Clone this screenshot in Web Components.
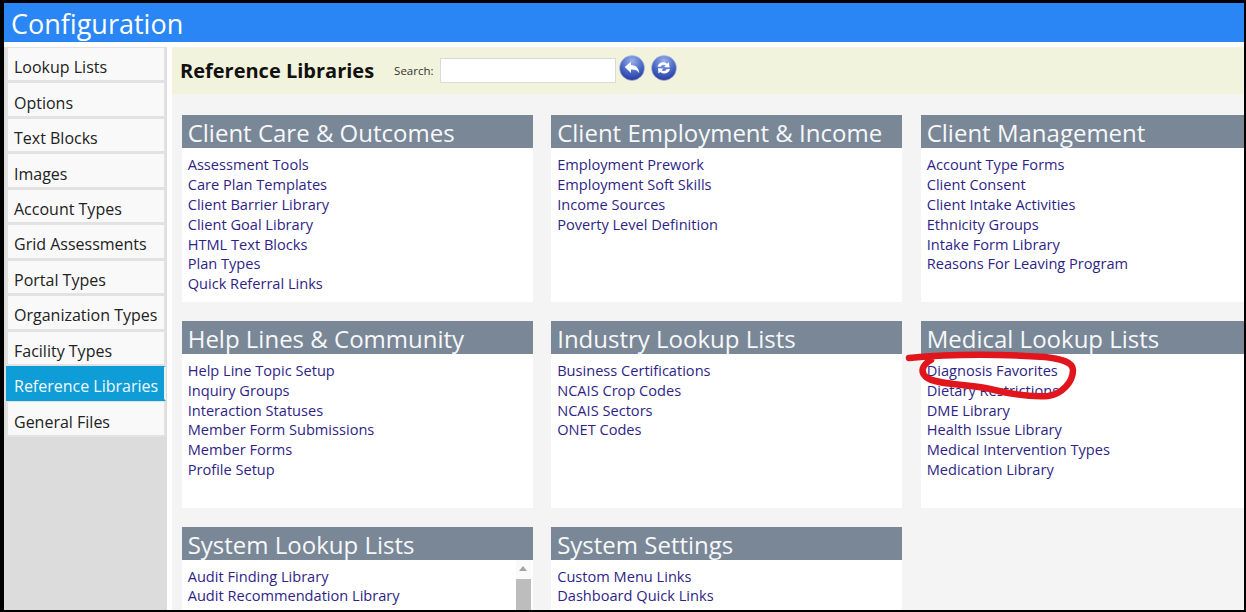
<!DOCTYPE html>
<html>
<head>
<meta charset="utf-8">
<title>Configuration</title>
<style>
html, body { margin: 0; height: 612px; overflow: hidden; background: #000; }
body { font-family: "Open Sans", "Noto Sans", sans-serif; padding: 3px 2px 2px 4px; box-sizing: border-box; }
</style>
</head>
<body>
<config-app>
  <nav-item>Lookup Lists</nav-item>
  <nav-item>Options</nav-item>
  <nav-item>Text Blocks</nav-item>
  <nav-item>Images</nav-item>
  <nav-item>Account Types</nav-item>
  <nav-item>Grid Assessments</nav-item>
  <nav-item>Portal Types</nav-item>
  <nav-item>Organization Types</nav-item>
  <nav-item>Facility Types</nav-item>
  <nav-item active>Reference Libraries</nav-item>
  <nav-item>General Files</nav-item>

  <lib-card slot="cards" title="Client Care &amp; Outcomes" links="Assessment Tools|Care Plan Templates|Client Barrier Library|Client Goal Library|HTML Text Blocks|Plan Types|Quick Referral Links"></lib-card>
  <lib-card slot="cards" title="Client Employment &amp; Income" links="Employment Prework|Employment Soft Skills|Income Sources|Poverty Level Definition"></lib-card>
  <lib-card slot="cards" title="Client Management" links="Account Type Forms|Client Consent|Client Intake Activities|Ethnicity Groups|Intake Form Library|Reasons For Leaving Program"></lib-card>
  <lib-card slot="cards" title="Help Lines &amp; Community" links="Help Line Topic Setup|Inquiry Groups|Interaction Statuses|Member Form Submissions|Member Forms|Profile Setup"></lib-card>
  <lib-card slot="cards" title="Industry Lookup Lists" links="Business Certifications|NCAIS Crop Codes|NCAIS Sectors|ONET Codes"></lib-card>
  <lib-card slot="cards" title="Medical Lookup Lists" links="Diagnosis Favorites|Dietary Restrictions|DME Library|Health Issue Library|Medical Intervention Types|Medication Library"></lib-card>
  <lib-card slot="cards" scroll title="System Lookup Lists" links="Audit Finding Library|Audit Recommendation Library|Case Audit Categories &amp; Recommendations"></lib-card>
  <lib-card slot="cards" title="System Settings" links="Custom Menu Links|Dashboard Quick Links|File Upload Sizes"></lib-card>
</config-app>

<script>
class NavItem extends HTMLElement {
    constructor() {
        super();
        this.attachShadow({mode: "open"});
        this.shadowRoot.innerHTML = `
            <style>
                :host {
                    display: flex;
                    align-items: center;
                    box-sizing: border-box;
                    height: 35.45px;
                    padding: 6px 0 0 6px;
                    background: #f9f9f9;
                    border: 2px solid #e2e2e2;
                    border-top-width: 1px;
                    color: #222;
                    font-size: 16px;
                    white-space: nowrap;
                }
                :host([active]) {
                    background: #0f9dd8;
                    border-color: #0f9dd8;
                    border-right-color: #f0f0f0;
                    color: #f2f8fb;
                }
            </style>
            <slot></slot>
        `;
    }
}
customElements.define('nav-item', NavItem);

class LibCard extends HTMLElement {
    constructor() {
        super();
        this.attachShadow({mode: "open"});
    }

    connectedCallback() {
        const links = this.getAttribute('links').split('|')
            .map(l => `<a>${l.replace(/&/g, '&amp;')}</a>`).join('');
        const title = this.getAttribute('title').replace(/&/g, '&amp;');
        this.shadowRoot.innerHTML = `
            <style>
                :host {
                    display: flex;
                    flex-direction: column;
                    height: 187px;
                    background: #fff;
                    min-width: 0;
                }
                h2 {
                    box-sizing: border-box;
                    margin: 0;
                    height: 33px;
                    padding: 1px 0 0 6px;
                    background: #7a8796;
                    color: #f6f8fa;
                    font-size: 24px;
                    font-weight: 400;
                    line-height: 33.4px;
                    white-space: nowrap;
                }
                .body {
                    display: flex;
                    flex: 1;
                    min-height: 0;
                }
                .links {
                    flex: 1;
                    min-width: 0;
                    padding: 7px 0 0 6px;
                }
                a {
                    display: block;
                    height: 19.9px;
                    line-height: 19.9px;
                    font-size: 14.6px;
                    color: #2f1f86;
                    white-space: nowrap;
                }
                .bar {
                    display: none;
                    flex: none;
                    width: 15px;
                    margin-right: 2px;
                    flex-direction: column;
                    align-items: center;
                    background: #fafafa;
                }
                .bar i {
                    width: 0;
                    height: 0;
                    margin-top: 6px;
                    border: 4px solid transparent;
                    border-top-width: 0;
                    border-bottom: 5px solid #a3a3a3;
                }
                .bar b {
                    align-self: stretch;
                    height: 120px;
                    margin-top: 8px;
                    background: #bdbdbd;
                }
                :host([scroll]) .bar { display: flex; }
            </style>
            <h2>${title}</h2>
            <div class="body">
                <div class="links">${links}</div>
                <div class="bar"><i></i><b></b></div>
            </div>
        `;
    }
}
customElements.define('lib-card', LibCard);

class RoundButton extends HTMLElement {
    constructor() {
        super();
        this.attachShadow({mode: "open"});
        const kind = this.getAttribute('kind');
        const glyph = kind === 'back'
            ? `<path d="M5.500 11.500 11.500 6.500v3.200c4.500.2 7.500 2.600 8 7.800-1.800-2.800-4.200-3.700-8-3.500v3.300z" fill="#fff"/>`
            : `<path d="M6.200 11.400C6.800 8.500 9.300 6.700 12.300 6.900c1.300.1 2.400.6 3.300 1.400l1.700-1.500.5 5.200-5.200-.4 1.600-1.500c-.6-.5-1.200-.8-2-.8-1.300 0-2.400.7-2.900 1.900zM18.300 13.400c-.6 2.900-3.100 4.600-6.100 4.400-1.300-.1-2.400-.6-3.300-1.400l-1.700 1.500-.5-5.200 5.200.4-1.600 1.500c.6.5 1.200.8 2 .8 1.300 0 2.400-.7 2.900-1.900z" fill="#fff"/>`;
        this.shadowRoot.innerHTML = `
            <style>
                :host { display: block; width: 26px; height: 26px; }
                svg { display: block; }
            </style>
            <svg width="26" height="26" viewBox="0 0 25 25">
                <defs>
                    <radialGradient id="g" cx="50%" cy="22%" r="80%">
                        <stop offset="0" stop-color="#9ab0ea"/>
                        <stop offset=".55" stop-color="#4a69c6"/>
                        <stop offset="1" stop-color="#26389a"/>
                    </radialGradient>
                </defs>
                <circle cx="12.500" cy="12.500" r="12" fill="url(#g)" stroke="#b9c2dc" stroke-width=".6"/>
                ${glyph}
            </svg>
        `;
    }
}
customElements.define('round-button', RoundButton);

class LibToolbar extends HTMLElement {
    constructor() {
        super();
        this.attachShadow({mode: "open"});
        this.shadowRoot.innerHTML = `
            <style>
                :host {
                    display: flex;
                    align-items: center;
                    height: 47px;
                    padding-left: 8px;
                    background: #f2f3dd;
                    color: #111;
                }
                h1 {
                    margin: 0 20px 0 0;
                    font-size: 20px;
                    font-weight: 700;
                    white-space: nowrap;
                }
                label {
                    margin-right: 6px;
                    font-size: 11.500px;
                    color: #333;
                }
                .box {
                    box-sizing: border-box;
                    width: 176px;
                    height: 25px;
                    margin-right: 3px;
                    background: #fff;
                    border: 1px solid #d9d9d9;
                }
                round-button { margin: 0 6px 5px 0; }
            </style>
            <h1>Reference Libraries</h1>
            <label>Search:</label>
            <div class="box"></div>
            <round-button kind="back"></round-button>
            <round-button kind="refresh"></round-button>
        `;
    }
}
customElements.define('lib-toolbar', LibToolbar);

class ConfigApp extends HTMLElement {
    constructor() {
        super();
        this.attachShadow({mode: "open"});
        this.shadowRoot.innerHTML = `
            <style>
                :host {
                    display: flex;
                    flex-direction: column;
                    position: relative;
                    height: 607px;
                    overflow: hidden;
                    background: #fff;
                }
                header {
                    height: 39px;
                    flex: none;
                    padding-left: 7px;
                    background: #2b86f5;
                    color: #fff;
                    font-size: 27px;
                    line-height: 42px;
                }
                .page {
                    display: flex;
                    flex: 1;
                    min-height: 0;
                    padding-top: 5px;
                }
                aside {
                    flex: none;
                    box-sizing: border-box;
                    width: 163px;
                    padding: 0 1px 0 2px;
                    background: #dcdcdc;
                }
                main {
                    flex: 1;
                    min-width: 0;
                    margin-left: 5px;
                    background: #f4f4f4;
                }
                .grid {
                    display: grid;
                    grid-template-columns: 351px 351px 1fr;
                    column-gap: 18.500px;
                    row-gap: 18.800px;
                    padding: 21px 0 0 9.700px;
                }
                svg.mark {
                    position: absolute;
                    left: -4px;
                    top: -3px;
                    pointer-events: none;
                }
            </style>
            <header>Configuration</header>
            <div class="page">
                <aside><slot></slot></aside>
                <main>
                    <lib-toolbar></lib-toolbar>
                    <div class="grid"><slot name="cards"></slot></div>
                </main>
            </div>
            <svg class="mark" width="1246" height="612" viewBox="0 0 1246 612">
                <path d="M909 358C950 354 1000 354 1045 357C1062 359 1073 362 1073 370C1073 382 1062 394 1048 396C1030 397 1010 394 990 389C970 384 935 385 926 377C920 372 922 365 931 360" fill="none" stroke="#e0161c" stroke-width="6.500" stroke-linecap="round" stroke-linejoin="round"/>
            </svg>
        `;
    }
}
customElements.define('config-app', ConfigApp);
</script>
</body>
</html>
